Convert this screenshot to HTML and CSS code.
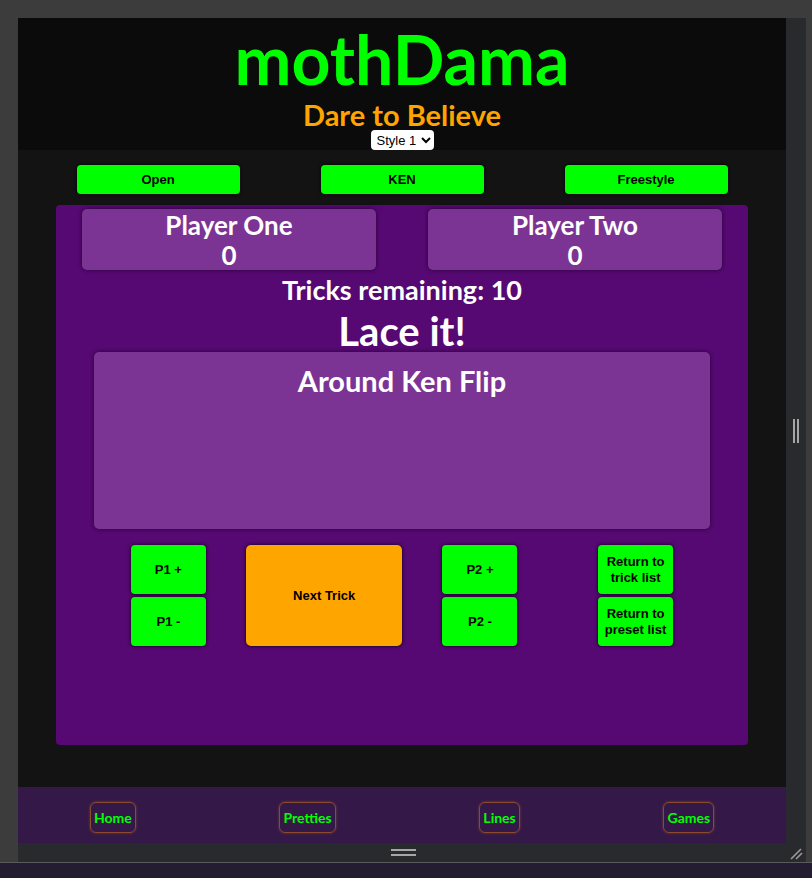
FILE: index.html
```html
<!DOCTYPE html>
<html lang="en">
<head>
<meta charset="utf-8">
<title>mothDama</title>
<link rel="stylesheet" href="styles.css">
</head>
<body>
<div class="app">
  <div class="device">
    <div class="page">
      <header class="masthead">
        <h1 class="title">mothDama</h1>
        <h2 class="tagline">Dare to Believe</h2>
        <select class="style-select"><option>Style 1</option><option>Style 2</option></select>
      </header>
      <main class="main">
        <nav class="modes">
          <button class="btn mode">Open</button>
          <button class="btn mode">KEN</button>
          <button class="btn mode">Freestyle</button>
        </nav>
        <section class="board">
          <div class="players">
            <div class="player"><div class="player-name">Player One</div><div class="player-score">0</div></div>
            <div class="player"><div class="player-name">Player Two</div><div class="player-score">0</div></div>
          </div>
          <p class="remaining">Tricks remaining: 10</p>
          <p class="call">Lace it!</p>
          <div class="trick"><h3 class="trick-name">Around Ken Flip</h3></div>
          <div class="controls">
            <div class="stack">
              <button class="btn small">P1 +</button>
              <button class="btn small">P1 -</button>
            </div>
            <button class="btn next">Next Trick</button>
            <div class="stack">
              <button class="btn small">P2 +</button>
              <button class="btn small">P2 -</button>
            </div>
            <div class="stack">
              <button class="btn small">Return to trick list</button>
              <button class="btn small">Return to preset list</button>
            </div>
          </div>
        </section>
      </main>
      <footer class="footer">
        <a class="nav-link" href="#">Home</a>
        <a class="nav-link" href="#">Pretties</a>
        <a class="nav-link" href="#">Lines</a>
        <a class="nav-link" href="#">Games</a>
      </footer>
    </div>
    <div class="vbar"><span class="grip-v"></span></div>
    <div class="hbar"><span class="grip-h"></span></div>
    <div class="corner">
      <svg width="14" height="14" viewBox="0 0 14 14"><path d="M2 13 L12 3 M7 13 L13 7" stroke="#9a9a9a" stroke-width="1.6" fill="none"/></svg>
    </div>
  </div>
  <div class="bottom-band"></div>
</div>
</body>
</html>
```

FILE: styles.css
```css
* { box-sizing: border-box; }

html, body {
  margin: 0;
  padding: 0;
}

body {
  background: #3c3c3c;
  height: 878px;
  overflow: hidden;
  font-family: "Lato", "Open Sans", sans-serif;
}

.app {
  padding-top: 18px;
}

.device {
  margin-left: 18px;
  display: grid;
  grid-template-columns: 768px 20px;
  grid-template-rows: 825px 19px;
}

.page {
  display: flex;
  flex-direction: column;
  height: 825px;
  overflow: hidden;
}

.masthead {
  height: 132px;
  background: #0b0b0b;
  display: flex;
  flex-direction: column;
  align-items: center;
}

.title {
  margin: 0;
  font-size: 68px;
  line-height: 81px;
  font-weight: 700;
  color: #00ff00;
}

.tagline {
  margin: 0;
  font-size: 29px;
  line-height: 31px;
  font-weight: 700;
  color: #ffa500;
}

.style-select {
  height: 20px;
  width: 63px;
  font-family: "Liberation Sans", Arial, sans-serif;
  font-size: 13px;
  background: #ffffff;
  color: #000;
  border: none;
  border-radius: 4px;
  padding: 0 2px;
}

.main {
  height: 637px;
  background: #131313;
  padding-top: 15px;
}

.modes {
  display: flex;
  justify-content: space-around;
  padding: 0 18px;
}

.btn {
  font-family: "Liberation Sans", Arial, sans-serif;
  font-size: 13px;
  font-weight: 700;
  color: #000;
  background: #00ff00;
  border: none;
  border-radius: 4px;
  box-shadow: 0 0 3px 1px rgba(0, 0, 0, 0.55);
  cursor: pointer;
}

.mode {
  width: 163px;
  height: 29px;
}

.board {
  width: 692px;
  height: 540px;
  margin: 11px auto 0;
  background: #560873;
  border-radius: 4px;
  padding-top: 4px;
  color: #ffffff;
}

.players {
  display: flex;
  justify-content: space-around;
}

.player {
  width: 294px;
  height: 61px;
  background: #7b3493;
  border-radius: 5px;
  box-shadow: 0 0 4px rgba(0, 0, 0, 0.55);
  text-align: center;
  font-size: 26px;
  font-weight: 700;
  line-height: 30px;
  padding-top: 1px;
}

.remaining {
  margin: 0;
  text-align: center;
  font-size: 27px;
  font-weight: 700;
  line-height: 40px;
}

.call {
  margin: 0;
  text-align: center;
  font-size: 40px;
  font-weight: 700;
  line-height: 42px;
}

.trick {
  width: 616px;
  height: 177px;
  margin: 0 auto;
  background: #7b3493;
  border-radius: 5px;
  box-shadow: 0 0 4px rgba(0, 0, 0, 0.55);
  padding-top: 9px;
}

.trick-name {
  margin: 0;
  text-align: center;
  font-size: 29px;
  font-weight: 700;
  line-height: 40px;
}

.controls {
  width: 90%;
  margin: 16px auto 0;
  display: grid;
  grid-template-columns: repeat(4, 1fr);
  justify-items: center;
  align-items: start;
}

.stack {
  display: flex;
  flex-direction: column;
  gap: 3px;
}

.small {
  width: 75px;
  height: 49px;
  padding: 0 4px;
  line-height: 16px;
}

.next {
  width: 156px;
  height: 101px;
  background: #ffa500;
  border-radius: 5px;
}

.footer {
  height: 56px;
  background: #341848;
  display: flex;
  justify-content: space-around;
  align-items: center;
  padding-top: 5px;
}

.nav-link {
  display: block;
  height: 31px;
  line-height: 29px;
  padding: 0 3px;
  border: 1px solid #8a4c2c;
  border-radius: 6px;
  box-shadow: 0 0 3px rgba(200, 110, 40, 0.45);
  color: #00ff00;
  font-weight: 700;
  font-size: 14px;
  text-decoration: none;
}

.vbar {
  grid-column: 2;
  grid-row: 1;
  background: #292a2d;
  display: flex;
  align-items: center;
  justify-content: center;
}

.grip-v {
  width: 6px;
  height: 24px;
  border-left: 2px solid #a6a6a6;
  border-right: 2px solid #a6a6a6;
  margin-right: 1px;
}

.hbar {
  grid-column: 1;
  grid-row: 2;
  background: #292a2d;
  display: flex;
  justify-content: center;
  align-items: center;
}

.grip-h {
  width: 25px;
  height: 7px;
  border-top: 2px solid #a6a6a6;
  border-bottom: 2px solid #a6a6a6;
  margin-left: 2px;
}

.corner {
  grid-column: 2;
  grid-row: 2;
  background: #292a2d;
  display: flex;
  align-items: center;
  justify-content: center;
}

.corner svg {
  display: block;
}

.bottom-band {
  height: 16px;
  border-top: 1px solid #5a5a5a;
  background: #241c31;
}
```
